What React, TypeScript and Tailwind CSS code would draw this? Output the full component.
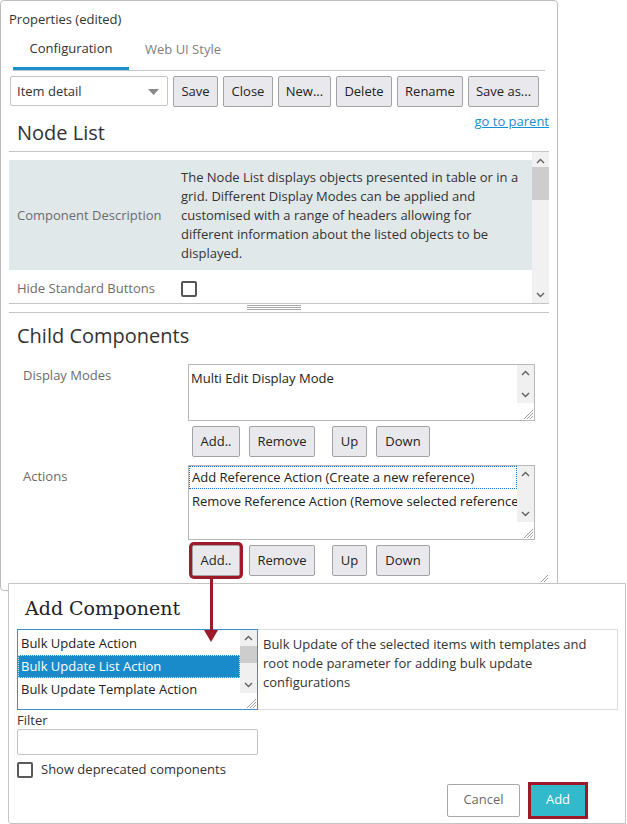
import React from "react";

const font = { fontFamily: '"Open Sans", "Noto Sans", sans-serif' };

function ChevronUp() {
  return (
    <svg width="9" height="6" viewBox="0 0 9 6" className="block">
      <polyline points="1,5 4.5,1.5 8,5" fill="none" stroke="#606060" strokeWidth="1.4" />
    </svg>
  );
}

function ChevronDown() {
  return (
    <svg width="9" height="6" viewBox="0 0 9 6" className="block">
      <polyline points="1,1 4.5,4.5 8,1" fill="none" stroke="#606060" strokeWidth="1.4" />
    </svg>
  );
}

function Grip() {
  return (
    <svg width="12" height="12" viewBox="0 0 12 12" className="block">
      <line x1="11" y1="2" x2="2" y2="11" stroke="#a0a0a0" strokeWidth="1" />
      <line x1="11" y1="5" x2="5" y2="11" stroke="#a0a0a0" strokeWidth="1" />
      <line x1="11" y1="8" x2="8" y2="11" stroke="#a0a0a0" strokeWidth="1" />
    </svg>
  );
}

function GrayButton({ label, w, outlined }: { label: string; w: string; outlined?: boolean }) {
  return (
    <button
      className={`${w} h-[31px] shrink-0 rounded-[2px] border border-[#a3a3a3] bg-[#e9e9ed] text-[13px] text-[#222] ${
        outlined ? "ring-[3px] ring-[#9c1a2a]" : ""
      }`}
    >
      {label}
    </button>
  );
}

function ListScroll({ h, thumb }: { h: string; thumb?: boolean }) {
  return (
    <div className={`flex ${h} w-[17px] flex-col items-center bg-[#f0f0f0] pt-[5px] pb-[5px]`}>
      <ChevronUp />
      {thumb ? <div className="mt-[5px] h-[17px] w-full bg-[#cdcdcd]" /> : null}
      <div className="flex-1" />
      <ChevronDown />
    </div>
  );
}

function ChildButtons({ outlined }: { outlined?: boolean }) {
  return (
    <div className="flex pl-[4px]">
      <GrayButton label="Add.." w="w-[48px]" outlined={outlined} />
      <div className="ml-[9px]">
        <GrayButton label="Remove" w="w-[66px]" />
      </div>
      <div className="ml-[17px]">
        <GrayButton label="Up" w="w-[35px]" />
      </div>
      <div className="ml-[9px]">
        <GrayButton label="Down" w="w-[54px]" />
      </div>
    </div>
  );
}

export default function App() {
  return (
    <div className="relative h-[824px] w-[627px] bg-white text-[#333]" style={font}>
      {/* Properties panel */}
      <div className="relative h-[591px] w-[558px] rounded-[4px] border border-[#bcbcbc] bg-white">
        <div className="pl-[8px] pt-[9px] text-[13px] leading-[18px] text-[#333]">Properties (edited)</div>

        {/* Tabs */}
        <div className="mx-[12px] mt-[2px] flex border-b border-[#c6c6c6]">
          <div className="flex h-[40px] w-[116px] items-center justify-center border-b-[3px] border-[#1a8fd0] text-[13px] text-[#333]">
            Configuration
          </div>
          <div className="flex h-[40px] items-center px-[16px] text-[13px] text-[#808080]">Web UI Style</div>
        </div>

        {/* Toolbar */}
        <div className="mt-[5px] flex gap-[5px] pl-[9px]">
          <div className="flex h-[30px] w-[158px] items-center justify-between rounded-[2px] border border-[#c4c4c4] bg-white pl-[6px] pr-[8px] pt-[2px] text-[13px] text-[#333]">
            <span>Item detail</span>
            <svg width="11" height="6" viewBox="0 0 11 6">
              <polygon points="0,0 11,0 5.5,6" fill="#8a8a8a" />
            </svg>
          </div>
          <GrayButton label="Save" w="w-[45px]" />
          <GrayButton label="Close" w="w-[50px]" />
          <GrayButton label="New..." w="w-[53px]" />
          <GrayButton label="Delete" w="w-[56px]" />
          <GrayButton label="Rename" w="w-[66px]" />
          <GrayButton label="Save as..." w="w-[71px]" />
        </div>

        {/* Node List heading */}
        <div className="ml-[8px] mr-[8px] flex items-start justify-between border-b border-[#c6c6c6] pb-[5px]">
          <div className="mt-[13px] pl-[8px] text-[20px] leading-[26px] text-[#333]">Node List</div>
          <a className="mt-[6px] text-[13px] leading-[16px] text-[#1a8fd0] underline">go to parent</a>
        </div>

        {/* Property grid */}
        <div className="ml-[8px] mr-[8px] flex h-[152px] border-b border-[#c6c6c6]">
          <div className="flex-1 pt-[8px]">
            <div className="flex bg-[#e1e8ea] pt-[8px] pb-[7px]">
              <div className="flex w-[172px] items-center pl-[8px] text-[13px] text-[#6c6c6c]">Component Description</div>
              <div className="w-[340px] text-[13px] leading-[19px] text-[#333]">
                The Node List displays objects presented in table or in a grid. Different Display Modes can be applied and
                customised with a range of headers allowing for different information about the listed objects to be
                displayed.
              </div>
            </div>
            <div className="flex h-[33px] items-center pt-[5px]">
              <div className="w-[172px] pl-[8px] text-[13px] text-[#6c6c6c]">Hide Standard Buttons</div>
              <div className="h-[16px] w-[16px] rounded-[2px] border-2 border-[#555]" />
            </div>
          </div>
          <div className="flex h-full w-[17px] flex-col items-center bg-[#f1f1f1] pt-[6px] pb-[5px]">
            <ChevronUp />
            <div className="mt-[3px] h-[33px] w-full bg-[#cdcdcd]" />
            <div className="flex-1" />
            <ChevronDown />
          </div>
        </div>
        <div className="ml-[8px] mr-[8px] flex h-[9px] justify-center border-b border-[#c6c6c6] pt-[1px]">
          <div className="ml-[-10px] flex w-[54px] flex-col gap-[1px]">
            <div className="h-px bg-[#a8a8a8]" />
            <div className="h-px bg-[#a8a8a8]" />
            <div className="h-px bg-[#a8a8a8]" />
          </div>
        </div>

        {/* Child components */}
        <div className="mt-[10px] pl-[16px] text-[20px] leading-[26px] text-[#333]">Child Components</div>

        <div className="mt-[15px] flex">
          <div className="w-[187px] pl-[22px] pt-[2px] text-[13px] leading-[18px] text-[#6c6c6c]">Display Modes</div>
          <div>
            <div className="relative flex h-[57px] w-[347px] border border-[#b8b8b8] bg-white">
              <div className="flex-1 pl-[2px] pt-[3px] text-[13px] leading-[20px] text-[#222]">Multi Edit Display Mode</div>
              <div className="flex flex-col">
                <ListScroll h="h-[38px]" />
                <div className="flex flex-1 items-end justify-end">
                  <Grip />
                </div>
              </div>
            </div>
            <div className="mt-[5px]">
              <ChildButtons />
            </div>
          </div>
        </div>

        <div className="mt-[8px] flex">
          <div className="w-[187px] pl-[22px] pt-[2px] text-[13px] leading-[18px] text-[#6c6c6c]">Actions</div>
          <div>
            <div className="flex h-[75px] w-[347px] border border-[#b8b8b8] bg-white">
              <div className="min-w-0 flex-1 overflow-hidden text-[13px] text-[#222]">
                <div className="h-[23px] border border-dotted border-[#1a6fc8] pl-[2px] leading-[21px] whitespace-nowrap">
                  Add Reference Action (Create a new reference)
                </div>
                <div className="h-[25px] pl-[3px] leading-[25px] whitespace-nowrap">
                  Remove Reference Action (Remove selected reference)
                </div>
              </div>
              <div className="flex flex-col">
                <ListScroll h="h-[56px]" />
                <div className="flex flex-1 items-end justify-end">
                  <Grip />
                </div>
              </div>
            </div>
            <div className="mt-[5px]">
              <ChildButtons outlined />
            </div>
          </div>
        </div>

        <div className="absolute right-[8px] bottom-[7px]">
          <svg width="9" height="9" viewBox="0 0 9 9">
            <line x1="8" y1="1" x2="1" y2="8" stroke="#999" />
            <line x1="8" y1="4" x2="4" y2="8" stroke="#999" />
          </svg>
        </div>
      </div>

      {/* Add Component dialog */}
      <div className="relative z-10 mt-[-8px] ml-[8px] flex h-[241px] w-[618px] flex-col rounded-bl-[3px] border border-[#c4c4c4] bg-white">
        <div
          className="pl-[16px] pt-[11px] text-[19px] leading-[26px] text-[#222]"
          style={{ fontFamily: '"DejaVu Serif", "Liberation Serif", serif' }}
        >
          Add Component
        </div>
        <div className="mt-[8px] flex pl-[8px]">
          <div className="flex h-[81px] w-[241px] border border-[#3b8fcc] bg-white">
            <div className="flex-1 pt-[2px] text-[13px] text-[#222]">
              <div className="h-[23px] pl-[3px] leading-[23px]">Bulk Update Action</div>
              <div className="h-[23px] border border-dotted border-[#cfe6f5] bg-[#1a8bca] pl-[2px] leading-[21px] text-white">
                Bulk Update List Action
              </div>
              <div className="h-[23px] pl-[3px] leading-[23px]">Bulk Update Template Action</div>
            </div>
            <div className="flex flex-col">
              <ListScroll h="h-[63px]" thumb />
              <div className="flex flex-1 items-end justify-end">
                <Grip />
              </div>
            </div>
          </div>
          <div className="h-[81px] w-[360px] border border-l-0 border-[#dcdcdc] pl-[5px] pr-[28px] pt-[5px] text-[13px] leading-[19px] text-[#333]">
            Bulk Update of the selected items with templates and root node parameter for adding bulk update
            configurations
          </div>
        </div>
        <div className="mt-[1px] pl-[8px] text-[13px] leading-[18px] text-[#333]">Filter</div>
        <div className="mt-[0px] ml-[8px] h-[26px] w-[241px] rounded-[2px] border border-[#c3c3c3]" />
        <div className="mt-[5px] flex items-center pl-[8px]">
          <div className="h-[16px] w-[16px] rounded-[2px] border-2 border-[#5a5a5a]" />
          <span className="ml-[8px] text-[13px] text-[#333]">Show deprecated components</span>
        </div>
        <div className="mt-[4px] flex items-center justify-end pr-[40px]">
          <button className="h-[33px] w-[73px] rounded-[2px] border border-[#a8a8a8] bg-white text-[13px] text-[#6a6a6a]">
            Cancel
          </button>
          <button className="ml-[11px] h-[31px] w-[54px] bg-[#33b9cc] text-[13px] text-white ring-[3px] ring-[#9c1a2a]">
            Add
          </button>
        </div>
      </div>

      {/* Red arrow pointing from Add.. to the dialog */}
      <div className="pointer-events-none absolute top-[578px] left-[204px] z-20 flex flex-col items-center">
        <div className="h-[52px] w-[3px] bg-[#9c1a2a]" />
        <svg width="14" height="12" viewBox="0 0 14 12" className="block">
          <polygon points="0,0 14,0 7,12" fill="#9c1a2a" />
        </svg>
      </div>
    </div>
  );
}
